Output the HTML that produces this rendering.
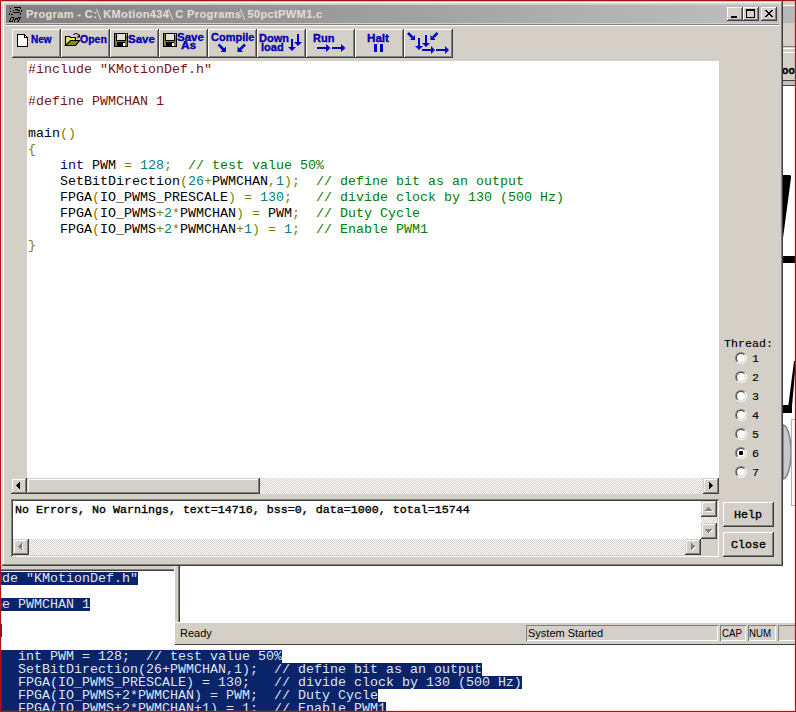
<!DOCTYPE html>
<html><head><meta charset="utf-8">
<style>
html,body{margin:0;padding:0;}
body{width:796px;height:712px;position:relative;overflow:hidden;background:#fff;font-family:"Liberation Sans",sans-serif;}
.a{position:absolute;}
.face{background:#d4d0c8;}
.raised{background:#d4d0c8;box-shadow:inset -1px -1px #404040,inset 1px 1px #fff,inset -2px -2px #808080,inset 2px 2px #d4d0c8;}
.sunken{box-shadow:inset 1px 1px #808080,inset -1px -1px #fff,inset 2px 2px #404040,inset -2px -2px #d4d0c8;}
.sraised{background:#d4d0c8;box-shadow:inset -1px -1px #404040,inset 1px 1px #d4d0c8,inset -2px -2px #808080,inset 2px 2px #fff;}
.dither{background-color:#eae8e4;background-image:repeating-conic-gradient(#fff 0 25%,#d4d0c8 0 50%);background-size:2px 2px;}
.mono{font-family:"Liberation Mono",monospace;white-space:pre;}
.tb{color:#0000b4;font-weight:bold;font-size:10px;line-height:9px;transform:scaleX(1.1);transform-origin:0 0;-webkit-text-stroke:0.3px #0000b4;}
.code{font-family:"Liberation Mono",monospace;font-size:13.33px;line-height:16px;white-space:pre;color:#000;}
.k{color:#000080}.n{color:#008080}.o{color:#808000}.c{color:#008000}.p{color:#781414}
.sel{background:#0a246a;color:#fff;}
.bgtxt{font-family:"Liberation Mono",monospace;font-size:13.33px;line-height:13px;white-space:pre;}
.bl{height:13px;}
.bl .sel{display:inline-block;height:13px;vertical-align:top;color:#dfe3f0;}
.bs{display:inline-block;position:relative;width:6px;height:10px;color:transparent;-webkit-text-stroke:0 transparent;}
.bs::after{content:"";position:absolute;left:0.8px;top:3.2px;width:1.4px;height:10.6px;background:#e0dcd4;transform:skewX(22deg);}
.st{font-size:11px;line-height:13px;color:#000;white-space:pre;}
</style></head><body>
<!-- red screen border -->
<div class="a" style="left:0;top:0;width:796px;height:712px;box-shadow:inset 0 0 0 1px #a41419,inset 0 0 0 2px rgba(230,80,80,0.18);z-index:50;"></div>

<!-- ===== background right strip ===== -->
<div class="a" style="left:783px;top:1px;width:13px;height:565px;background:#fff;overflow:hidden;">
  <div class="a face" style="left:0;top:0;width:13px;height:85px;"></div>
  <div class="a" style="left:0;top:4px;width:13px;height:1px;background:#fff;"></div>
  <div class="a" style="left:0;top:5px;width:13px;height:17px;background:#b8b8b8;"></div>
  <div class="a" style="left:0;top:45px;width:13px;height:1px;background:#808080;"></div>
  <div class="a" style="left:0;top:47px;width:13px;height:1px;background:#fff;"></div>
  <div class="a" style="left:0;top:51px;width:13px;height:1px;background:#fff;"></div>
  <div class="a" style="left:-1px;top:63px;font-size:10.5px;font-weight:bold;line-height:13px;color:#000;font-family:'Liberation Sans',sans-serif;-webkit-text-stroke:0.4px #000;">oo</div>
  <div class="a" style="left:0;top:79px;width:13px;height:1px;background:#404040;"></div>
  <div class="a" style="left:0;top:80px;width:13px;height:4px;background:#c0c0c0;"></div>
  <div class="a" style="left:0;top:84px;width:13px;height:1px;background:#404040;"></div>
  <svg class="a" style="left:0;top:0;" width="13" height="565">
    <path d="M0,174H7Q8.5,174.5 8,177L0,237Z" fill="#000"/>
    <rect x="0" y="255" width="13" height="7" fill="#000"/>
    <path d="M11,360L13,360L8.5,411H4.5Z" fill="#000"/>
    <rect x="0" y="404" width="9" height="8" fill="#000"/>
    <path d="M0,424A8,27 0 0 1 0,478Z" fill="#c8c8cc" stroke="#808080" stroke-width="1.5"/>
    <rect x="8.5" y="418.5" width="6" height="86" fill="none" stroke="#b0b0b0"/>
  </svg>
</div>

<!-- ===== background bottom ===== -->
<div class="a" style="left:0;top:566px;width:796px;height:146px;background:#fff;overflow:hidden;">
  <div class="a face" style="left:0;top:0;width:175px;height:3px;"></div>
  <div class="a" style="left:0;top:3px;width:175px;height:1px;background:#808080;"></div>
  <div class="a" style="left:0;top:4px;width:175px;height:1px;background:#404040;"></div>
  <div class="a bgtxt" style="left:-46px;top:6px;"><div class="bl"><span class="sel">#include "KMotionDef.h"</span></div><div class="bl"></div><div class="bl"><span class="sel">#define PWMCHAN 1</span></div><div class="bl"></div><div class="bl"><span class="sel">main()</span></div><div class="bl"><span class="sel">{</span></div><div class="bl"><span class="sel">        int PWM = 128;  // test value 50%</span></div><div class="bl"><span class="sel">        SetBitDirection(26+PWMCHAN,1);  // define bit as an output</span></div><div class="bl"><span class="sel">        FPGA(IO_PWMS_PRESCALE) = 130;   // divide clock by 130 (500 Hz)</span></div><div class="bl"><span class="sel">        FPGA(IO_PWMS+2*PWMCHAN) = PWM;  // Duty Cycle</span></div><div class="bl"><span class="sel">        FPGA(IO_PWMS+2*PWMCHAN+1) = 1;  // Enable PWM1</span></div></div>
  <!-- KMotion main window portion -->
  <div class="a face" style="left:174px;top:0;width:622px;height:79px;"></div>
  <div class="a" style="left:178px;top:0;width:618px;height:56px;background:#fff;box-shadow:inset 1px 0 #808080,inset 2px 0 #404040,inset 0 -1px #fff;"></div>
  <div class="a" style="left:174px;top:56px;width:622px;height:1px;background:#fff;"></div>
  <div class="a" style="left:174px;top:78px;width:622px;height:1px;background:#404040;"></div>
  <div class="a" style="left:174px;top:0;width:1px;height:79px;background:#fff;"></div>
  <div class="a st" style="left:180px;top:61px;">Ready</div>
  <div class="a" style="left:526px;top:59px;width:192px;height:16px;box-shadow:inset 1px 1px #808080,inset -1px -1px #fff;"></div>
  <div class="a st" style="left:528px;top:61px;">System Started</div>
  <div class="a" style="left:720px;top:59px;width:26px;height:16px;box-shadow:inset 1px 1px #808080,inset -1px -1px #fff;"></div>
  <div class="a st" style="left:722px;top:61px;transform:scaleX(0.88);transform-origin:0 0;">CAP</div>
  <div class="a" style="left:748px;top:59px;width:28px;height:16px;box-shadow:inset 1px 1px #808080,inset -1px -1px #fff;"></div>
  <div class="a st" style="left:749px;top:61px;transform:scaleX(0.88);transform-origin:0 0;">NUM</div>
  <div class="a" style="left:778px;top:59px;width:30px;height:16px;box-shadow:inset 1px 1px #808080,inset -1px -1px #fff;"></div>
</div>


<!-- ===== main Program window ===== -->
<div class="a face" style="left:2px;top:1px;width:781px;height:565px;box-shadow:inset -1px -1px #404040,inset 1px 1px #d4d0c8,inset -2px -2px #808080,inset 2px 2px #fff;">
</div>
<!-- title bar -->
<div class="a" style="left:6px;top:5px;width:773px;height:18px;background:linear-gradient(to right,#808080,#c0c0c0);"></div>
<div class="a" style="left:26px;top:6px;font-size:11px;font-weight:bold;color:#e0dcd4;line-height:16px;white-space:pre;letter-spacing:0.38px;-webkit-text-stroke:0.15px #e0dcd4;">Program - C:<span class="bs">\</span>KMotion434<span class="bs">\</span>C Programs<span class="bs">\</span>50pctPWM1.c</div>
<!-- caption buttons -->
<div class="a raised" style="left:727px;top:7px;width:16px;height:14px;"></div>
<div class="a raised" style="left:743px;top:7px;width:16px;height:14px;"></div>
<div class="a raised" style="left:761px;top:7px;width:16px;height:14px;"></div>

<!-- etched line under title -->
<div class="a" style="left:6px;top:24px;width:773px;height:1px;background:#808080;"></div>
<div class="a" style="left:6px;top:25px;width:773px;height:1px;background:#fff;"></div>

<!-- toolbar buttons -->
<div class="a raised" style="left:12px;top:29px;width:49px;height:29px;"></div>
<div class="a raised" style="left:61px;top:29px;width:49px;height:29px;"></div>
<div class="a raised" style="left:110px;top:29px;width:49px;height:29px;"></div>
<div class="a raised" style="left:159px;top:29px;width:49px;height:29px;"></div>
<div class="a raised" style="left:208px;top:29px;width:49px;height:29px;"></div>
<div class="a raised" style="left:257px;top:29px;width:49px;height:29px;"></div>
<div class="a raised" style="left:306px;top:29px;width:49px;height:29px;"></div>
<div class="a raised" style="left:355px;top:29px;width:49px;height:29px;"></div>
<div class="a raised" style="left:404px;top:29px;width:49px;height:29px;"></div>


<svg class="a" style="left:0;top:0;" width="460" height="60" viewBox="0 0 460 60" shape-rendering="crispEdges">
 <!-- caption icon -->
 <g fill="#000"><rect x="14" y="7" width="7" height="1"/><rect x="10" y="8" width="1" height="1"/><rect x="20" y="8" width="1" height="1"/><rect x="15" y="9" width="3" height="1"/><rect x="13" y="10" width="1" height="1"/><rect x="17" y="10" width="3" height="1"/><rect x="21" y="10" width="1" height="1"/><rect x="10" y="11" width="1" height="1"/><rect x="21" y="11" width="1" height="1"/><rect x="13" y="12" width="7" height="1"/><rect x="9" y="13" width="1" height="1"/><rect x="20" y="13" width="1" height="1"/><rect x="9" y="14" width="1" height="1"/><rect x="11" y="14" width="2" height="1"/><rect x="20" y="14" width="1" height="1"/><rect x="11" y="17" width="3" height="1"/><rect x="18" y="17" width="3" height="1"/><rect x="10" y="18" width="1" height="1"/><rect x="13" y="18" width="1" height="1"/><rect x="15" y="18" width="1" height="1"/><rect x="16" y="18" width="2" height="1"/><rect x="19" y="18" width="1" height="1"/><rect x="10" y="19" width="1" height="1"/><rect x="13" y="19" width="1" height="1"/><rect x="15" y="19" width="1" height="1"/><rect x="17" y="19" width="1" height="1"/><rect x="19" y="19" width="1" height="1"/><rect x="9" y="20" width="1" height="1"/><rect x="12" y="20" width="1" height="1"/><rect x="14" y="20" width="1" height="1"/><rect x="18" y="20" width="1" height="1"/><rect x="9" y="21" width="4" height="1"/><rect x="14" y="21" width="1" height="1"/><rect x="17" y="21" width="2" height="1"/></g>
</svg>
<svg class="a" style="left:0;top:0;" width="460" height="60" viewBox="0 0 460 60">
 <!-- New page -->
 <path d="M17.5,34.5H24.5L27.5,37.5V46.5H17.5Z" fill="#fff" stroke="#000" shape-rendering="crispEdges"/>
 <path d="M24.5,34.5V37.5H27.5" fill="none" stroke="#000" shape-rendering="crispEdges"/>
 <!-- Open folder -->
 <path d="M65.5,45.5V36.5H69.5L70.5,37.5H75.5V40.5" fill="#e8e848" stroke="#000" stroke-width="1.2"/>
 <path d="M65.5,45.5H75.5L79.5,40.5H70.5Z" fill="#8c8c10" stroke="#000" stroke-width="1.2"/>
 <path d="M73.5,34.8Q76,32 78.6,35" fill="none" stroke="#000" stroke-width="1.1"/>
 <path d="M80,34L80,37.5L76.5,37.5Z" fill="#000"/>
 <!-- Save floppy -->
 <g shape-rendering="crispEdges">
 <rect x="114" y="33" width="14" height="14" fill="#000"/>
 <rect x="115" y="34" width="12" height="12" fill="#808020"/>
 <rect x="116" y="34" width="10" height="7" fill="#000"/>
 <rect x="117" y="34" width="8" height="6" fill="#e4e0d8"/>
 <rect x="117" y="42" width="8" height="5" fill="#000"/>
 <rect x="123" y="43" width="2" height="3" fill="#fff"/>
 <rect x="126" y="34" width="1" height="1" fill="#fff"/>
 </g>
 <!-- Save As floppy -->
 <g shape-rendering="crispEdges" transform="translate(49,0)">
 <rect x="114" y="33" width="14" height="14" fill="#000"/>
 <rect x="115" y="34" width="12" height="12" fill="#808020"/>
 <rect x="116" y="34" width="10" height="7" fill="#000"/>
 <rect x="117" y="34" width="8" height="6" fill="#e4e0d8"/>
 <rect x="117" y="42" width="8" height="5" fill="#000"/>
 <rect x="123" y="43" width="2" height="3" fill="#fff"/>
 <rect x="126" y="34" width="1" height="1" fill="#fff"/>
 </g>
 <g fill="#0000c8">
 <!-- compile arrows -->
 <path d="M217.6,45.4L219.4,43.6L224.4,48.6L222.6,50.4Z"/><path d="M226,46.5V52H220.5Z"/>
 <path d="M245.9,45.4L244.1,43.6L239.1,48.6L240.9,50.4Z"/><path d="M237.5,46.5V52H243Z"/>
 <!-- download arrows -->
 <rect x="297" y="34" width="2" height="8"/><path d="M294,42H302L298,46Z"/>
 <rect x="291" y="39" width="2" height="8"/><path d="M288,47H296L292,51Z"/>
 <!-- run arrows -->
 <rect x="317" y="47" width="9" height="2"/><path d="M326,44V52L330.5,48Z"/>
 <rect x="332" y="47" width="9" height="2"/><path d="M341,44V52L345.5,48Z"/>
 <!-- halt -->
 <rect x="374" y="44" width="3" height="8"/><rect x="380" y="44" width="3" height="8"/>
 <!-- multi -->
 <path d="M407.1,33.9L408.9,32.1L413.4,36.6L411.6,38.4Z"/><path d="M415,35V40H410Z"/>
 <path d="M438.4,33.9L436.6,32.1L432.1,36.6L433.9,38.4Z"/><path d="M430.5,35V40H435.5Z"/>
 <rect x="418" y="38" width="2" height="8"/><path d="M415,46H423L419,50Z"/>
 <rect x="425" y="35" width="2" height="8"/><path d="M422,43H430L426,47Z"/>
 <rect x="422" y="49" width="9" height="2"/><path d="M431,46V54L435,50Z"/>
 <rect x="436" y="49" width="9" height="2"/><path d="M445,46V54L449,50Z"/>
 </g>
</svg>
<div class="a tb" style="left:31px;top:35px;transform:scaleX(1.0);">New</div>
<div class="a tb" style="left:80px;top:35px;transform:scaleX(1.05);">Open</div>
<div class="a tb" style="left:128px;top:35px;transform:scaleX(1.15);">Save</div>
<div class="a tb" style="left:177px;top:33px;transform:scaleX(1.15);">Save</div>
<div class="a tb" style="left:181px;top:41px;transform:scaleX(1.19);">As</div>
<div class="a tb" style="left:211px;top:33px;">Compile</div>
<div class="a tb" style="left:259px;top:34px;">Down</div>
<div class="a tb" style="left:261px;top:43px;">load</div>
<div class="a tb" style="left:313px;top:34px;">Run</div>
<div class="a tb" style="left:367px;top:34px;transform:scaleX(1.16);">Halt</div>

<!-- editor -->
<div class="a" style="left:27px;top:61px;width:692px;height:417px;background:#fff;"></div>
<div class="a code" style="left:28px;top:62px;"><span class="p">#include "KMotionDef.h"</span>

<span class="p">#define PWMCHAN 1</span>

main<span class="o">()</span>
<span class="o">{</span>
    <span class="k">int</span> PWM <span class="o">=</span> <span class="n">128</span><span class="o">;</span>  <span class="c">// test value 50%</span>
    SetBitDirection<span class="o">(</span><span class="n">26</span><span class="o">+</span>PWMCHAN<span class="o">,</span><span class="n">1</span><span class="o">);</span>  <span class="c">// define bit as an output</span>
    FPGA<span class="o">(</span>IO_PWMS_PRESCALE<span class="o">)</span> <span class="o">=</span> <span class="n">130</span><span class="o">;</span>   <span class="c">// divide clock by 130 (500 Hz)</span>
    FPGA<span class="o">(</span>IO_PWMS<span class="o">+</span><span class="n">2</span><span class="o">*</span>PWMCHAN<span class="o">)</span> <span class="o">=</span> PWM<span class="o">;</span>  <span class="c">// Duty Cycle</span>
    FPGA<span class="o">(</span>IO_PWMS<span class="o">+</span><span class="n">2</span><span class="o">*</span>PWMCHAN<span class="o">+</span><span class="n">1</span><span class="o">)</span> <span class="o">=</span> <span class="n">1</span><span class="o">;</span>  <span class="c">// Enable PWM1</span>
<span class="o">}</span></div>

<!-- editor hscroll -->
<div class="a dither" style="left:11px;top:478px;width:708px;height:16px;"></div>
<div class="a sraised" style="left:11px;top:478px;width:16px;height:16px;"></div>
<div class="a sraised" style="left:27px;top:478px;width:233px;height:16px;"></div>
<div class="a sraised" style="left:703px;top:478px;width:16px;height:16px;"></div>

<!-- output box -->
<div class="a sunken" style="left:11px;top:499px;width:708px;height:58px;background:#fff;"></div>
<div class="a mono" style="left:15px;top:503px;font-size:11.67px;line-height:14px;font-weight:normal;-webkit-text-stroke:0.35px #000;">No Errors, No Warnings, text=14716, bss=0, data=1000, total=15744</div>
<div class="a dither" style="left:13px;top:539px;width:688px;height:16px;"></div>
<div class="a sraised" style="left:13px;top:539px;width:16px;height:16px;"></div>
<div class="a sraised" style="left:685px;top:539px;width:16px;height:16px;"></div>
<div class="a dither" style="left:701px;top:501px;width:16px;height:38px;"></div>
<div class="a sraised" style="left:701px;top:501px;width:16px;height:16px;"></div>
<div class="a sraised" style="left:701px;top:523px;width:16px;height:16px;"></div>
<div class="a face" style="left:701px;top:539px;width:16px;height:16px;"></div>

<!-- thread -->
<div class="a mono" style="left:724px;top:337px;font-size:11.67px;line-height:14px;-webkit-text-stroke:0.15px #000;">Thread:</div>

<!-- Help / Close -->
<div class="a raised" style="left:723px;top:502px;width:51px;height:25px;"></div>
<div class="a raised" style="left:723px;top:532px;width:51px;height:25px;"></div>
<div class="a mono" style="left:734px;top:508px;font-size:11.67px;line-height:14px;-webkit-text-stroke:0.35px #000;">Help</div>
<div class="a mono" style="left:731px;top:538px;font-size:11.67px;line-height:14px;-webkit-text-stroke:0.35px #000;">Close</div>


<!-- caption glyphs -->
<svg class="a" style="left:720px;top:0;" width="62" height="28" shape-rendering="crispEdges">
 <rect x="11" y="16" width="6" height="2" fill="#000"/>
 <rect x="26" y="9" width="9" height="9" fill="#000"/><rect x="27" y="11" width="7" height="6" fill="#d4d0c8"/>
 <g fill="#000"><rect x="45" y="10" width="1" height="1"/><rect x="46" y="10" width="1" height="1"/><rect x="51" y="10" width="1" height="1"/><rect x="52" y="10" width="1" height="1"/><rect x="46" y="11" width="1" height="1"/><rect x="47" y="11" width="1" height="1"/><rect x="50" y="11" width="1" height="1"/><rect x="51" y="11" width="1" height="1"/><rect x="47" y="12" width="1" height="1"/><rect x="48" y="12" width="1" height="1"/><rect x="49" y="12" width="1" height="1"/><rect x="50" y="12" width="1" height="1"/><rect x="48" y="13" width="1" height="1"/><rect x="49" y="13" width="1" height="1"/><rect x="47" y="14" width="1" height="1"/><rect x="48" y="14" width="1" height="1"/><rect x="49" y="14" width="1" height="1"/><rect x="50" y="14" width="1" height="1"/><rect x="46" y="15" width="1" height="1"/><rect x="47" y="15" width="1" height="1"/><rect x="50" y="15" width="1" height="1"/><rect x="51" y="15" width="1" height="1"/><rect x="45" y="16" width="1" height="1"/><rect x="46" y="16" width="1" height="1"/><rect x="51" y="16" width="1" height="1"/><rect x="52" y="16" width="1" height="1"/></g>
</svg>

<!-- radios -->
<style>
.rad{position:absolute;width:10px;height:10px;border-radius:50%;border:1px solid;border-color:#808080 #fff #fff #808080;}
.rad i{position:absolute;left:0;top:0;width:8px;height:8px;border-radius:50%;border:1px solid;border-color:#404040 #d4d0c8 #d4d0c8 #404040;background:#fff;}
.rad b{position:absolute;left:3px;top:3px;width:4px;height:4px;border-radius:1px;background:#000;}
.rl{position:absolute;font-family:"Liberation Mono",monospace;font-size:11.67px;line-height:14px;-webkit-text-stroke:0.15px #000;}
</style>
<div class="rad" style="left:735px;top:352px;"><i></i></div><div class="rl" style="left:752px;top:352px;">1</div>
<div class="rad" style="left:735px;top:371px;"><i></i></div><div class="rl" style="left:752px;top:371px;">2</div>
<div class="rad" style="left:735px;top:390px;"><i></i></div><div class="rl" style="left:752px;top:390px;">3</div>
<div class="rad" style="left:735px;top:409px;"><i></i></div><div class="rl" style="left:752px;top:409px;">4</div>
<div class="rad" style="left:735px;top:428px;"><i></i></div><div class="rl" style="left:752px;top:428px;">5</div>
<div class="rad" style="left:735px;top:447px;"><i></i><b></b></div><div class="rl" style="left:752px;top:447px;">6</div>
<div class="rad" style="left:735px;top:466px;"><i></i></div><div class="rl" style="left:752px;top:466px;">7</div>

<!-- scroll arrows -->
<svg class="a" style="left:0;top:0;" width="720" height="560" shape-rendering="crispEdges"><rect x="19" y="482" width="1" height="1" fill="#000"/><rect x="18" y="483" width="2" height="1" fill="#000"/><rect x="17" y="484" width="3" height="1" fill="#000"/><rect x="16" y="485" width="4" height="1" fill="#000"/><rect x="17" y="486" width="3" height="1" fill="#000"/><rect x="18" y="487" width="2" height="1" fill="#000"/><rect x="19" y="488" width="1" height="1" fill="#000"/><rect x="709" y="482" width="1" height="1" fill="#000"/><rect x="709" y="483" width="2" height="1" fill="#000"/><rect x="709" y="484" width="3" height="1" fill="#000"/><rect x="709" y="485" width="4" height="1" fill="#000"/><rect x="709" y="486" width="3" height="1" fill="#000"/><rect x="709" y="487" width="2" height="1" fill="#000"/><rect x="709" y="488" width="1" height="1" fill="#000"/><rect x="22" y="544" width="1" height="1" fill="#fff"/><rect x="21" y="545" width="2" height="1" fill="#fff"/><rect x="20" y="546" width="3" height="1" fill="#fff"/><rect x="19" y="547" width="4" height="1" fill="#fff"/><rect x="20" y="548" width="3" height="1" fill="#fff"/><rect x="21" y="549" width="2" height="1" fill="#fff"/><rect x="22" y="550" width="1" height="1" fill="#fff"/><rect x="21" y="543" width="1" height="1" fill="#808080"/><rect x="20" y="544" width="2" height="1" fill="#808080"/><rect x="19" y="545" width="3" height="1" fill="#808080"/><rect x="18" y="546" width="4" height="1" fill="#808080"/><rect x="19" y="547" width="3" height="1" fill="#808080"/><rect x="20" y="548" width="2" height="1" fill="#808080"/><rect x="21" y="549" width="1" height="1" fill="#808080"/><rect x="692" y="544" width="1" height="1" fill="#fff"/><rect x="692" y="545" width="2" height="1" fill="#fff"/><rect x="692" y="546" width="3" height="1" fill="#fff"/><rect x="692" y="547" width="4" height="1" fill="#fff"/><rect x="692" y="548" width="3" height="1" fill="#fff"/><rect x="692" y="549" width="2" height="1" fill="#fff"/><rect x="692" y="550" width="1" height="1" fill="#fff"/><rect x="691" y="543" width="1" height="1" fill="#808080"/><rect x="691" y="544" width="2" height="1" fill="#808080"/><rect x="691" y="545" width="3" height="1" fill="#808080"/><rect x="691" y="546" width="4" height="1" fill="#808080"/><rect x="691" y="547" width="3" height="1" fill="#808080"/><rect x="691" y="548" width="2" height="1" fill="#808080"/><rect x="691" y="549" width="1" height="1" fill="#808080"/><rect x="709" y="508" width="1" height="1" fill="#fff"/><rect x="708" y="509" width="3" height="1" fill="#fff"/><rect x="707" y="510" width="5" height="1" fill="#fff"/><rect x="706" y="511" width="7" height="1" fill="#fff"/><rect x="708" y="507" width="1" height="1" fill="#808080"/><rect x="707" y="508" width="3" height="1" fill="#808080"/><rect x="706" y="509" width="5" height="1" fill="#808080"/><rect x="705" y="510" width="7" height="1" fill="#808080"/><rect x="706" y="530" width="7" height="1" fill="#fff"/><rect x="707" y="531" width="5" height="1" fill="#fff"/><rect x="708" y="532" width="3" height="1" fill="#fff"/><rect x="709" y="533" width="1" height="1" fill="#fff"/><rect x="705" y="529" width="7" height="1" fill="#808080"/><rect x="706" y="530" width="5" height="1" fill="#808080"/><rect x="707" y="531" width="3" height="1" fill="#808080"/><rect x="708" y="532" width="1" height="1" fill="#808080"/></svg>

</body></html>
